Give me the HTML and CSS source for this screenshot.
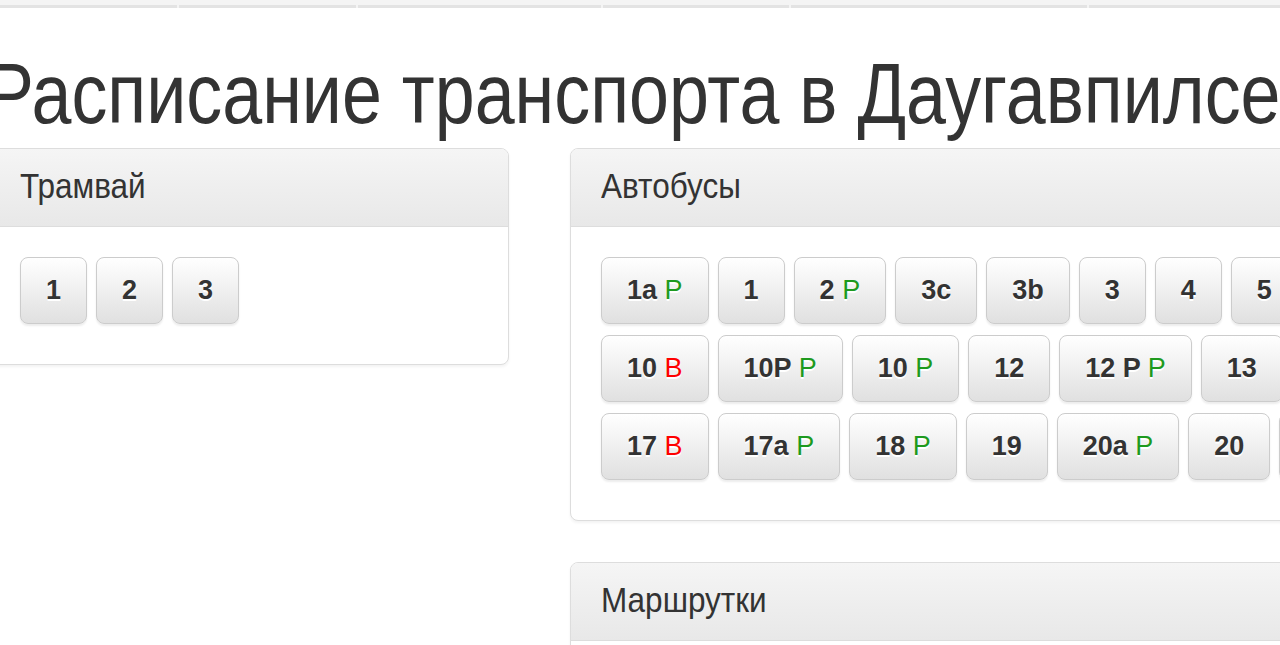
FILE: index.html
```html
<!doctype html>
<html>
<head>
    <meta charset="UTF-8">
    <title>Расписание транспорта в Даугавпилсе</title>
    <link rel="stylesheet" href="styles.css">
</head>
<body>
<ul class="topnav">
    <li></li>
    <li></li>
    <li></li>
    <li></li>
    <li></li>
    <li></li>
</ul>

<div class="container">
    <h1 class="title">Расписание транспорта в Даугавпилсе</h1>

    <div class="row">
        <div class="col-side">
            <div class="panel">
                <div class="panel-heading"><h3 class="panel-title">Трамвай</h3></div>
                <div class="panel-body">
                    <a class="btn">1</a>
                    <a class="btn">2</a>
                    <a class="btn">3</a>
                </div>
            </div>
        </div>

        <div class="col-main">
            <div class="panel">
                <div class="panel-heading"><h3 class="panel-title">Автобусы</h3></div>
                <div class="panel-body">
                    <a class="btn">1a <span class="p">P</span></a>
                    <a class="btn">1</a>
                    <a class="btn">2 <span class="p">P</span></a>
                    <a class="btn">3c</a>
                    <a class="btn">3b</a>
                    <a class="btn">3</a>
                    <a class="btn">4</a>
                    <a class="btn">5</a>
                    <a class="btn">6</a>
                    <a class="btn">7</a>
                    <a class="btn">8</a>
                    <a class="btn">9</a>
                    <a class="btn">10 <span class="b">B</span></a>
                    <a class="btn">10P <span class="p">P</span></a>
                    <a class="btn">10 <span class="p">P</span></a>
                    <a class="btn">12</a>
                    <a class="btn">12 P <span class="p">P</span></a>
                    <a class="btn">13</a>
                    <a class="btn">14</a>
                    <a class="btn">15</a>
                    <a class="btn">16</a>
                    <a class="btn">17 <span class="b">B</span></a>
                    <a class="btn">17a <span class="p">P</span></a>
                    <a class="btn">18 <span class="p">P</span></a>
                    <a class="btn">19</a>
                    <a class="btn">20a <span class="p">P</span></a>
                    <a class="btn">20</a>
                    <a class="btn">21</a>
                    <a class="btn">22</a>
                </div>
            </div>

            <div class="panel">
                <div class="panel-heading"><h3 class="panel-title">Маршрутки</h3></div>
                <div class="panel-body">
                    <a class="btn">1</a>
                    <a class="btn">2</a>
                </div>
            </div>
        </div>
    </div>
</div>
</body>
</html>
```

FILE: styles.css
```css
html, body {
    overflow: hidden;
}
body {
    margin: 0;
    font-family: "Liberation Sans", Arial, sans-serif;
    color: #333;
    background: #fff;
}
.topnav {
    list-style: none;
    margin: 0;
    padding: 0;
    height: 8px;
    display: flex;
    gap: 2px;
    background: #f4f4f4;
}
.topnav li {
    height: 5px;
    border-bottom: 3px solid #e3e3e3;
    background: #f4f4f4;
}
.topnav li:nth-child(1) { width: 177px; }
.topnav li:nth-child(2) { width: 177px; }
.topnav li:nth-child(3) { width: 243px; }
.topnav li:nth-child(4) { width: 186px; }
.topnav li:nth-child(5) { width: 296px; }
.topnav li:nth-child(6) { flex: 1; }

.container {
    margin-left: -11px;
}
/* the original face is narrower than Arial */
.title {
    margin: 38px 0 7px -3px;
    font-size: 86px;
    font-weight: normal;
    line-height: 1.1;
    white-space: nowrap;
    transform: scaleX(0.835);
    transform-origin: left center;
}
.row {
    display: flex;
    align-items: flex-start;
}
.col-side {
    width: 520px;
    flex: none;
}
.col-main {
    width: 1101px;
    flex: none;
    margin-left: 61px;
}
.panel {
    background: #fff;
    border: 1px solid #ddd;
    border-radius: 8px;
    box-shadow: 0 2px 3px rgba(0, 0, 0, 0.05);
    margin-bottom: 41px;
}
.panel-heading {
    padding: 18px 30px 21px;
    background: linear-gradient(to bottom, #f5f5f5, #e8e8e8);
    border-bottom: 1px solid #ddd;
    border-radius: 7px 7px 0 0;
}
.panel-title {
    margin: 0;
    font-size: 35px;
    font-weight: normal;
    line-height: 38px;
    white-space: nowrap;
    transform: scaleX(0.9);
    transform-origin: left center;
}
.panel-body {
    display: flex;
    flex-wrap: wrap;
    gap: 11px 9px;
    padding: 30px 30px 40px;
}
.btn {
    display: block;
    padding: 14px 25px;
    font-size: 27px;
    font-weight: bold;
    line-height: 37px;
    color: #333;
    white-space: nowrap;
    text-shadow: 0 2px 0 #fff;
    background: linear-gradient(to bottom, #fff, #e0e0e0);
    border: 1px solid #ccc;
    border-radius: 8px;
    box-shadow: inset 0 2px 0 rgba(255, 255, 255, 0.15), 0 2px 2px rgba(0, 0, 0, 0.075);
}
.btn .p {
    color: #1e9a1e;
    font-weight: normal;
}
.btn .b {
    color: #f00;
    font-weight: normal;
}
```
